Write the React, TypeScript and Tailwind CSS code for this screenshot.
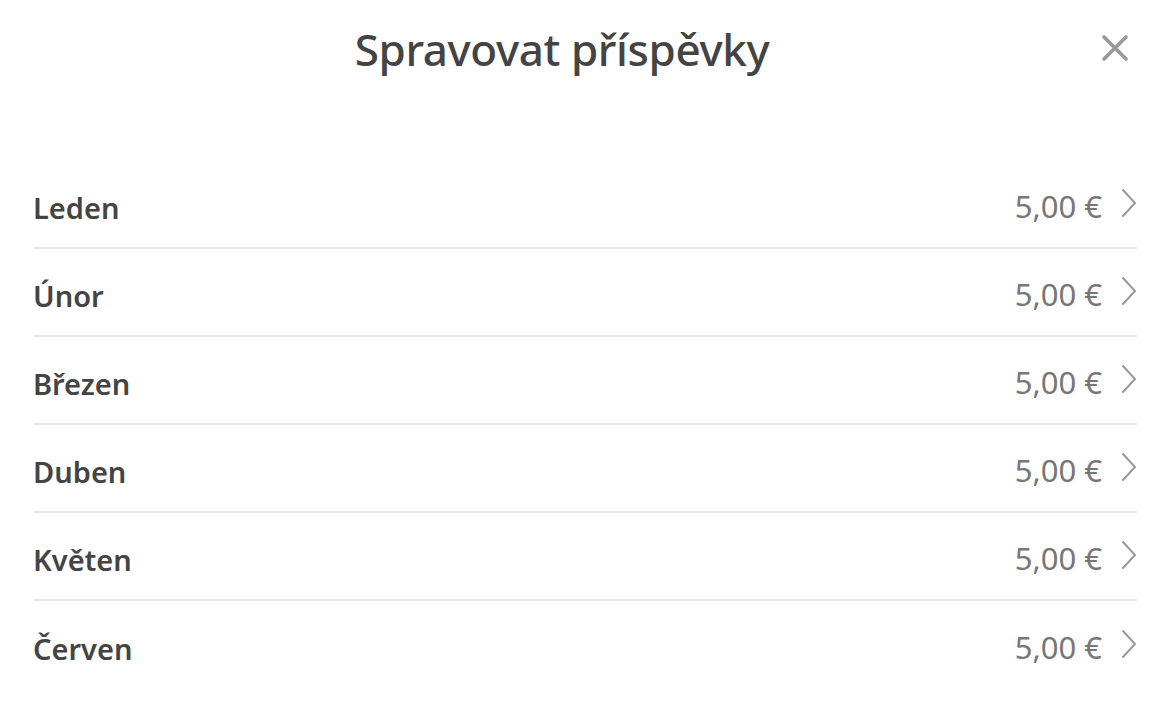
import { X } from "lucide-react";

const months = ["Leden", "Únor", "Březen", "Duben", "Květen", "Červen"];

function Chevron() {
  return (
    <svg width="16" height="30" viewBox="0 0 16 30" fill="none" className="text-[#999] -mt-[6px]">
      <polyline points="2,2 14,15 2,28" stroke="currentColor" strokeWidth="2" strokeLinecap="round" strokeLinejoin="round" />
    </svg>
  );
}

export default function App() {
  return (
    <div className="w-[1166px] h-[706px] bg-white font-['Noto_Sans',sans-serif] pl-[33px] pr-[29px] pt-[19px]">
      {/* Header */}
      <div className="relative flex items-center justify-center h-[60px]">
        <h1 className="text-[44px] font-medium text-[#444] tracking-[-0.4px] -ml-[46px]">Spravovat příspěvky</h1>
        <button className="absolute right-[0px] top-[7px] text-[#999]">
          <X size={44} strokeWidth={2} />
        </button>
      </div>

      {/* List */}
      <ul className="mt-[82px]">
        {months.map((m, i) => (
          <li
            key={m}
            className={`flex items-center justify-between h-[88px] ${i < months.length - 1 ? "border-b-2 border-[#e8e8e8]" : ""}`}
          >
            <span className="text-[29px] font-semibold text-[#444] pt-[8px]">{m}</span>
            <span className="flex items-center gap-[19px] text-[31px] text-[#777] pt-[4px]">
              5,00 €
              <Chevron />
            </span>
          </li>
        ))}
      </ul>
    </div>
  );
}
